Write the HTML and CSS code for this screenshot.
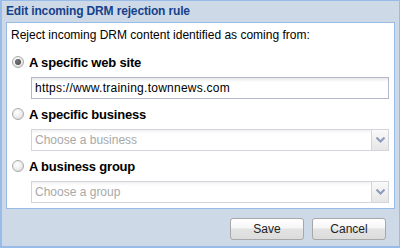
FILE: index.html
```html
<!DOCTYPE html>
<html>
<head>
<meta charset="utf-8">
<link rel="stylesheet" href="styles.css">
</head>
<body>
<div class="window">
  <div class="title">Edit incoming DRM rejection rule</div>
  <div class="panel">
    <div class="intro">Reject incoming DRM content identified as coming from:</div>
    <label class="opt first"><span class="radio checked"></span><span class="opt-label">A specific web site</span></label>
    <div class="field text"><span class="val">https://www.training.townnews.com</span></div>
    <label class="opt"><span class="radio"></span><span class="opt-label">A specific business</span></label>
    <div class="field combo"><span class="ph">Choose a business</span><span class="trigger"><svg width="9" height="6" viewBox="0 0 9 6"><path d="M0.5 0.5 L4.5 4.5 L8.5 0.5" fill="none" stroke="#8a9bbb" stroke-width="2"/></svg></span></div>
    <label class="opt"><span class="radio"></span><span class="opt-label">A business group</span></label>
    <div class="field combo"><span class="ph">Choose a group</span><span class="trigger"><svg width="9" height="6" viewBox="0 0 9 6"><path d="M0.5 0.5 L4.5 4.5 L8.5 0.5" fill="none" stroke="#8a9bbb" stroke-width="2"/></svg></span></div>
  </div>
  <div class="buttons">
    <button class="btn">Save</button>
    <button class="btn">Cancel</button>
  </div>
</div>
</body>
</html>
```
FILE: styles.css
```css
html, body {
  margin: 0;
  padding: 0;
  width: 400px;
  height: 248px;
  overflow: hidden;
  font-family: "Liberation Sans", Arial, sans-serif;
}
.window {
  box-sizing: border-box;
  width: 400px;
  height: 248px;
  border: 1px solid #99bbe8;
  border-left-width: 2px;
  border-bottom-width: 2px;
  background: #ced9e7;
  display: flex;
  flex-direction: column;
}
.title {
  height: 21px;
  line-height: 21px;
  padding-left: 4px;
  font-size: 12px;
  font-weight: bold;
  letter-spacing: -0.15px;
  color: #15428b;
}
.panel {
  margin: 0 4px 0 4px;
  height: 187px;
  box-sizing: border-box;
  border: 1px solid #99bbe8;
  background: #fff;
  padding: 5px 5px 0 4px;
  display: flex;
  flex-direction: column;
  font-size: 12px;
  color: #000;
}
.intro {
  line-height: 14px;
  height: 14px;
}
.opt {
  display: flex;
  align-items: center;
  height: 14px;
  margin-top: 8px;
  margin-left: 1px;
}
.opt.first { margin-top: 13px; }
.radio {
  box-sizing: border-box;
  width: 12px;
  height: 12px;
  border-radius: 50%;
  border: 1px solid #a9a9a9;
  background: radial-gradient(circle at 40% 35%, #fff 0%, #ececec 55%, #cfcfcf 100%);
  position: relative;
}
.radio.checked::after {
  content: "";
  position: absolute;
  left: 2px;
  top: 2px;
  width: 6px;
  height: 6px;
  border-radius: 50%;
  background: radial-gradient(circle at 40% 40%, #777 0%, #444 100%);
}
.opt-label {
  margin-left: 5px;
  font-weight: bold;
  font-size: 13px;
  letter-spacing: -0.2px;
}
.field {
  box-sizing: border-box;
  height: 22px;
  margin: 8px 0 0 20px;
  display: flex;
  align-items: center;
  font-size: 12px;
}
.text {
  border: 1px solid #b5b8c8;
  background: linear-gradient(#e8e8e8 0px, #fff 4px, #fff 100%);
  padding-left: 3px;
}
.val {
  letter-spacing: 0.25px;
}
.combo {
  border: 1px solid #d4d4dc;
  background: linear-gradient(#f2f2f2 0px, #fff 4px, #fff 100%);
  padding-left: 3px;
  justify-content: space-between;
}
.ph {
  color: #a8a8a8;
}
.trigger {
  box-sizing: border-box;
  width: 17px;
  height: 20px;
  border-left: 1px solid #d4d4dc;
  background: linear-gradient(#fafafa, #e6e6e6);
  display: flex;
  align-items: center;
  justify-content: center;
}
.buttons {
  display: flex;
  justify-content: flex-end;
  gap: 8px;
  margin-top: 9px;
  padding-right: 13px;
}
.btn {
  box-sizing: border-box;
  width: 74px;
  height: 22px;
  border: 1px solid #a8a8a8;
  border-radius: 3px;
  background: linear-gradient(#ffffff 0%, #f6f6f6 45%, #e3e3e3 50%, #dcdcdc 100%);
  font-family: "Liberation Sans", Arial, sans-serif;
  font-size: 12px;
  color: #222;
  padding: 0;
}
```
